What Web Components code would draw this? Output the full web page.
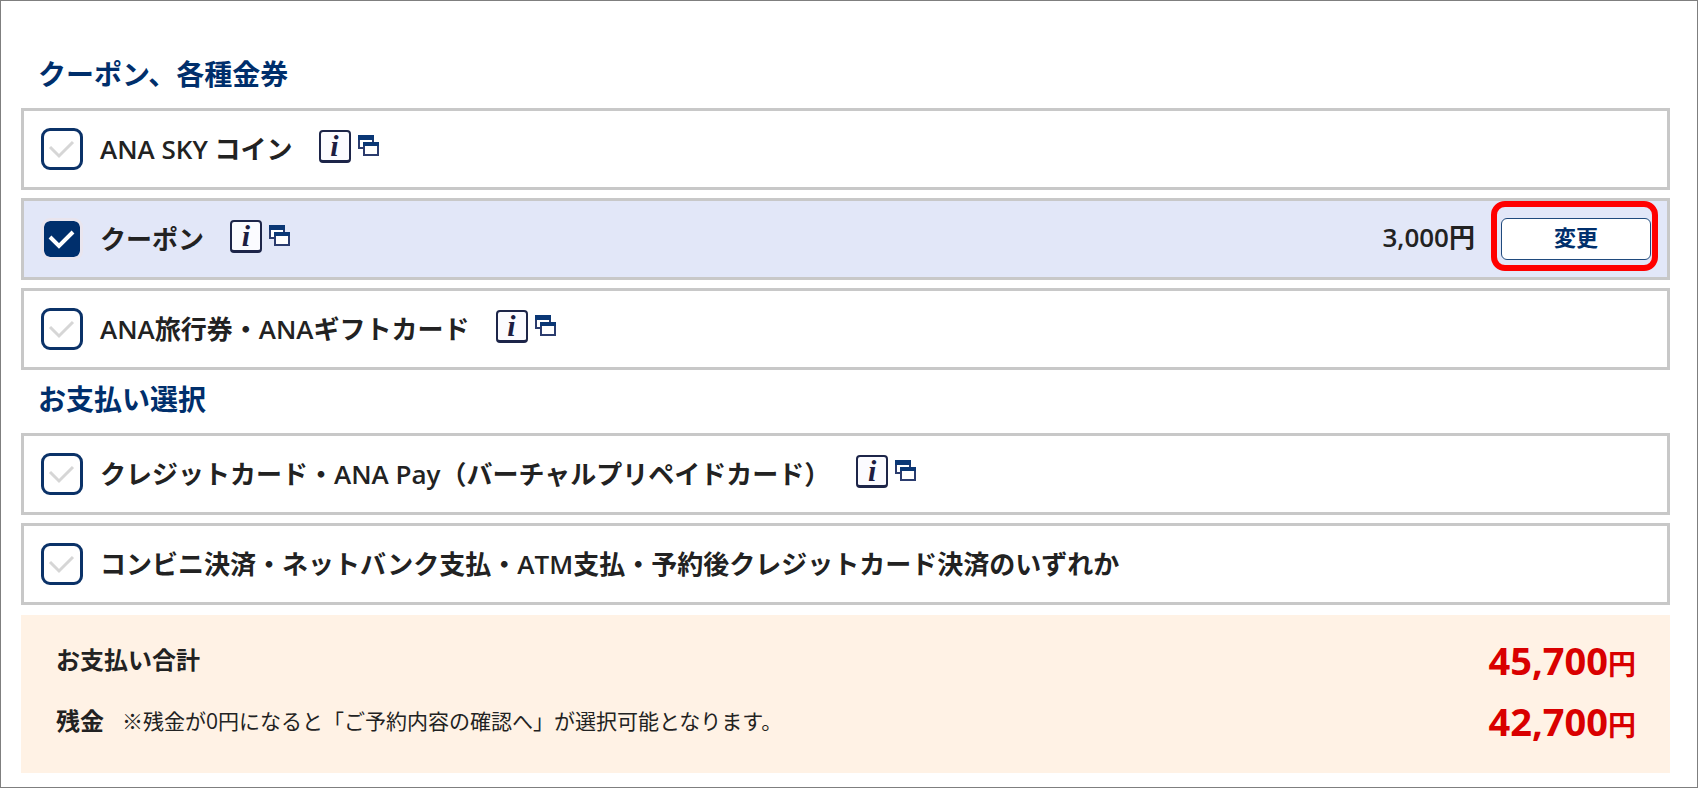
<!DOCTYPE html>
<html lang="ja">
<head>
<meta charset="UTF-8">
<meta name="viewport" content="width=device-width, initial-scale=1">
<title>お支払い選択</title>
<style>
  body {
    margin: 0;
    font-family: "Open Sans", "Noto Sans CJK JP", sans-serif;
    color: #222;
    background: #fff;
  }
</style>
</head>
<body>
<payment-page>
  <payment-section heading="クーポン、各種金券">
    <payment-option info>ANA SKY コイン</payment-option>
    <payment-option info checked price="3,000円" action="変更">クーポン</payment-option>
    <payment-option info>ANA旅行券・ANAギフトカード</payment-option>
  </payment-section>
  <payment-section heading="お支払い選択">
    <payment-option info>クレジットカード・ANA Pay（バーチャルプリペイドカード）</payment-option>
    <payment-option>コンビニ決済・ネットバンク支払・ATM支払・予約後クレジットカード決済のいずれか</payment-option>
  </payment-section>
  <payment-summary>
    <summary-line amount="45,700">お支払い合計</summary-line>
    <summary-line amount="42,700">残金<span slot="note">※残金が0円になると「ご予約内容の確認へ」が選択可能となります。</span></summary-line>
  </payment-summary>
</payment-page>

<script>
class PaymentPage extends HTMLElement {
  constructor() {
    super();
    this._shadowRoot = this.attachShadow({ mode: "open" });
  }

  connectedCallback() {
    this._shadowRoot.innerHTML = `
      <style>
        :host {
          display: block;
          box-sizing: border-box;
          min-height: 100vh;
          padding: 49px 27px 14px 20px;
          border: 1px solid #7f7f7f;
        }
      </style>
      <main><slot></slot></main>
    `;
  }
}

class PaymentSection extends HTMLElement {
  constructor() {
    super();
    this._shadowRoot = this.attachShadow({ mode: "open" });
  }

  connectedCallback() {
    this._shadowRoot.innerHTML = `
      <style>
        :host {
          display: block;
        }

        h2 {
          margin: 0;
          padding: 4px 17px 14px;
          font-size: 28px;
          line-height: 40px;
          font-weight: 700;
          color: #002f6c;
        }

        .options {
          display: grid;
          gap: 8px;
          padding-bottom: 5px;
        }
      </style>
      <h2>${this.getAttribute("heading")}</h2>
      <div class="options"><slot></slot></div>
    `;
  }
}

class PaymentOption extends HTMLElement {
  constructor() {
    super();
    this._shadowRoot = this.attachShadow({ mode: "open" });
  }

  connectedCallback() {
    this.checked = this.hasAttribute("checked");
    this.price = this.getAttribute("price");
    this.action = this.getAttribute("action");
    this.render();
  }

  render() {
    this._shadowRoot.innerHTML = `
      <style>
        :host {
          display: flex;
          align-items: center;
          box-sizing: border-box;
          min-height: 82px;
          padding: 0 16px 0 17px;
          border: 3px solid #c8c8c8;
          font-size: 26px;
          line-height: 36px;
          font-weight: 600;
        }

        :host([checked]) {
          background: #e2e7f8;
        }

        .tick {
          display: grid;
          flex: none;
          width: 42px;
          height: 42px;
          margin-right: 17px;
        }

        .tick > * {
          grid-area: 1 / 1;
        }

        input {
          appearance: none;
          box-sizing: border-box;
          width: 42px;
          height: 42px;
          margin: 0;
          border: 3px solid #0b3268;
          border-radius: 9px;
          background: #fff;
        }

        input:checked {
          border: 3px solid #e9e5ee;
          background: #002f6c;
          background-clip: padding-box;
        }

        .tick svg {
          pointer-events: none;
          fill: none;
          stroke: #d6d6d6;
          stroke-width: 3;
        }

        input:checked + svg {
          stroke: #fff;
          stroke-width: 4;
        }

        .info {
          display: flex;
          align-items: center;
          gap: 7px;
          margin: 0 0 6px 26px;
          color: #1d1d42;
          text-decoration: none;
        }

        .mark {
          box-sizing: border-box;
          width: 32px;
          height: 33px;
          border: 2px solid #1d2549;
          border-bottom-width: 3px;
          border-radius: 4px;
          background: #fbfbff;
          font: italic 700 30px/27px "Liberation Serif", serif;
          text-align: center;
        }

        .price {
          margin: 0 26px 4px auto;
        }

        .action {
          position: relative;
        }

        /* red callout round the button */
        .action::after {
          content: "";
          position: absolute;
          inset: -17px -7px -11px -10px;
          border: 6px solid #f00;
          border-radius: 14px;
          pointer-events: none;
        }

        button {
          display: block;
          width: 150px;
          height: 42px;
          padding: 0 0 4px;
          border: 1px solid #1f4a7d;
          border-radius: 6px;
          background: #fff;
          color: #002f6c;
          font: inherit;
          font-size: 22px;
          font-weight: 700;
          line-height: 32px;
        }
      </style>
      <span class="tick">
        <input type="checkbox" id="option" ${this.checked ? "checked" : ""}>
        <svg viewBox="0 0 42 42" width="42" height="42" aria-hidden="true">
          <path d="M9 19l9 9 14-14"/>
        </svg>
      </span>
      <label for="option"><slot></slot></label>
      ${this.hasAttribute("info") ? this.infoLink() : ""}
      ${this.price ? `<span class="price">${this.price}</span>` : ""}
      ${this.action ? `<span class="action"><button type="button">${this.action}</button></span>` : ""}
    `;
  }

  infoLink() {
    return `
      <a class="info" href="#">
        <span class="mark">i</span>
        <svg viewBox="0 0 22 22" width="22" height="22" aria-hidden="true">
          <path d="M1 1h14v12H1z" fill="#fff" stroke="#2b3c6e" stroke-width="2"/>
          <path d="M0 0h16v5H0z" fill="#0a3775"/>
          <path d="M6 8h14v12H6z" fill="#fff" stroke="#2b3c6e" stroke-width="2"/>
          <path d="M5 7h16v4H5z" fill="#0a3775"/>
        </svg>
      </a>
    `;
  }
}

class PaymentSummary extends HTMLElement {
  constructor() {
    super();
    this._shadowRoot = this.attachShadow({ mode: "open" });
  }

  connectedCallback() {
    this._shadowRoot.innerHTML = `
      <style>
        :host {
          display: block;
          margin-top: 5px;
          padding: 14px 34px 22px 35px;
          background: #fff2e5;
        }
      </style>
      <slot></slot>
    `;
  }
}

class SummaryLine extends HTMLElement {
  constructor() {
    super();
    this._shadowRoot = this.attachShadow({ mode: "open" });
  }

  connectedCallback() {
    this._shadowRoot.innerHTML = `
      <style>
        :host {
          display: flex;
          align-items: center;
          min-height: 61px;
          font-size: 24px;
          line-height: 36px;
          font-weight: 700;
        }

        .note {
          margin-left: 18px;
          font-size: 21px;
          font-weight: 400;
        }

        .amount {
          margin-left: auto;
          font-size: 38px;
          color: #d90000;
        }

        small {
          font-size: 28px;
          line-height: 28px;
        }
      </style>
      <span><slot></slot></span>
      <span class="note"><slot name="note"></slot></span>
      <span class="amount">${this.getAttribute("amount")}<small>円</small></span>
    `;
  }
}

customElements.define("payment-page", PaymentPage);
customElements.define("payment-section", PaymentSection);
customElements.define("payment-option", PaymentOption);
customElements.define("payment-summary", PaymentSummary);
customElements.define("summary-line", SummaryLine);
</script>
</body>
</html>
